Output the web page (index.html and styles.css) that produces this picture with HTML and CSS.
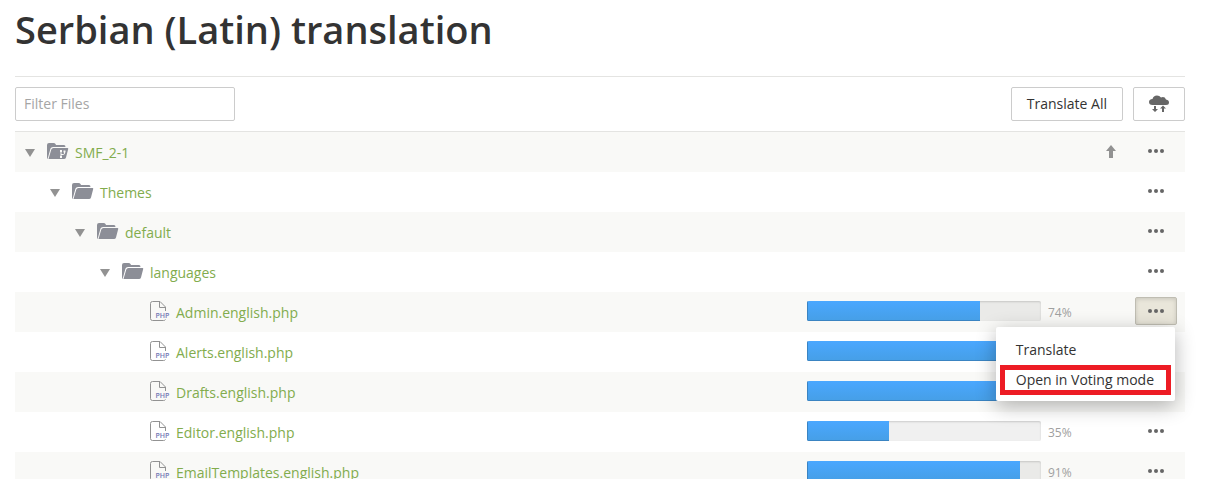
FILE: index.html
```html
<!DOCTYPE html>
<html lang="en">
<head>
<meta charset="utf-8">
<title>Serbian (Latin) translation</title>
<link rel="stylesheet" href="styles.css">
</head>
<body>
<svg class="sprite" aria-hidden="true">
  <symbol id="folder" viewBox="0 0 22 17">
    <path d="M0 14V2Q0 0 2 0H6.500Q8 0 8.500 1L9 2H17Q18.500 2 18.500 4H6Q4 4 3.500 5.500L1 14.500V16Q0 15.500 0 14Z"/>
    <path d="M6.500 5H20.500Q21.500 5 21.200 6L19 14.500Q18.500 16 17 16H1.500L4.300 6.500Q4.800 5 6.500 5Z"/>
  </symbol>
  <symbol id="file" viewBox="0 0 20 21">
    <path class="file-outline" d="M15.500 10V6L10 .5H2.500Q.5 .5 .5 2.500V17.500Q.5 19.500 2.500 19.500H13.500Q15 19.500 15.500 18.500M9.500 .5V6.500H15.500"/>
    <text class="file-type" x="5.500" y="17">PHP</text>
  </symbol>
  <symbol id="dots" viewBox="0 0 16 4">
    <circle cx="2" cy="2" r="2"/><circle cx="8" cy="2" r="2"/><circle cx="14" cy="2" r="2"/>
  </symbol>
</svg>
<main class="page">
  <h1 class="title">Serbian (Latin) translation</h1>
  <div class="toolbar">
    <input class="filter" type="text" placeholder="Filter Files" aria-label="Filter Files">
    <div class="toolbar-actions">
      <button class="button" type="button">Translate All</button>
      <button class="button button-icon" type="button" aria-label="Synchronize">
        <svg width="20" height="18" viewBox="0 0 20 18"><path d="M3.500 10Q0 10 0 7Q0 4.300 3.500 4Q4.300 .5 8 .5Q10.500 .5 12 2.500Q15.500 1 17 4.500Q20 5 20 7.500Q20 10 17 10ZM5 11H7V14H9L6 17L3 14H5ZM13 17V13.500H11L14 10.500L17 13.500H15V17Z"/></svg>
      </button>
    </div>
  </div>
  <table class="files">
    <colgroup><col><col class="col-progress"><col class="col-upload"><col class="col-actions"></colgroup>
    <tbody>
      <tr>
        <td><div class="entry level-0"><span class="caret"></span><svg class="folder" width="22" height="17"><use href="#folder"/><path class="branch" d="M14 14V7.500M14 11.500H16.500Q17.500 11.500 17.500 10V9"/><path class="branch-node" d="M13 7h2v2h-2zM13 13h2v2h-2zM16.500 7.500h2v2h-2z"/></svg><a href="#">SMF_2-1</a></div></td>
        <td></td>
        <td><svg class="upload" width="10" height="13" viewBox="0 0 10 13"><path d="M5 0L10 6H7V13H3V6H0Z"/></svg></td>
        <td><button class="more" type="button" aria-label="Actions"><svg width="16" height="4"><use href="#dots"/></svg></button></td>
      </tr>
      <tr>
        <td><div class="entry level-1"><span class="caret"></span><svg class="folder" width="22" height="17"><use href="#folder"/></svg><a href="#">Themes</a></div></td>
        <td></td><td></td>
        <td><button class="more" type="button" aria-label="Actions"><svg width="16" height="4"><use href="#dots"/></svg></button></td>
      </tr>
      <tr>
        <td><div class="entry level-2"><span class="caret"></span><svg class="folder" width="22" height="17"><use href="#folder"/></svg><a href="#">default</a></div></td>
        <td></td><td></td>
        <td><button class="more" type="button" aria-label="Actions"><svg width="16" height="4"><use href="#dots"/></svg></button></td>
      </tr>
      <tr>
        <td><div class="entry level-3"><span class="caret"></span><svg class="folder" width="22" height="17"><use href="#folder"/></svg><a href="#">languages</a></div></td>
        <td></td><td></td>
        <td><button class="more" type="button" aria-label="Actions"><svg width="16" height="4"><use href="#dots"/></svg></button></td>
      </tr>
      <tr>
        <td><div class="entry level-4"><svg class="file" width="20" height="21"><use href="#file"/></svg><a href="#">Admin.english.php</a></div></td>
        <td><div class="progress"><div class="bar"><div class="fill" style="width:74%"></div></div><span class="percent">74%</span></div></td>
        <td></td>
        <td class="has-menu"><button class="more more-open" type="button" aria-label="Actions" aria-expanded="true"><svg width="16" height="4"><use href="#dots"/></svg></button>
          <div class="menu"><a class="menu-item" href="#">Translate</a><a class="menu-item menu-marked" href="#">Open in Voting mode</a></div></td>
      </tr>
      <tr>
        <td><div class="entry level-4"><svg class="file" width="20" height="21"><use href="#file"/></svg><a href="#">Alerts.english.php</a></div></td>
        <td><div class="progress"><div class="bar"><div class="fill" style="width:100%"></div></div></div></td>
        <td></td><td></td>
      </tr>
      <tr>
        <td><div class="entry level-4"><svg class="file" width="20" height="21"><use href="#file"/></svg><a href="#">Drafts.english.php</a></div></td>
        <td><div class="progress"><div class="bar"><div class="fill" style="width:100%"></div></div></div></td>
        <td></td><td></td>
      </tr>
      <tr>
        <td><div class="entry level-4"><svg class="file" width="20" height="21"><use href="#file"/></svg><a href="#">Editor.english.php</a></div></td>
        <td><div class="progress"><div class="bar"><div class="fill" style="width:35%"></div></div><span class="percent">35%</span></div></td>
        <td></td>
        <td><button class="more" type="button" aria-label="Actions"><svg width="16" height="4"><use href="#dots"/></svg></button></td>
      </tr>
      <tr>
        <td><div class="entry level-4"><svg class="file" width="20" height="21"><use href="#file"/></svg><a href="#">EmailTemplates.english.php</a></div></td>
        <td><div class="progress"><div class="bar"><div class="fill" style="width:91%"></div></div><span class="percent">91%</span></div></td>
        <td></td>
        <td><button class="more" type="button" aria-label="Actions"><svg width="16" height="4"><use href="#dots"/></svg></button></td>
      </tr>
    </tbody>
  </table>
</main>
</body>
</html>
```
FILE: styles.css
```css
* { box-sizing: border-box; }

body {
  margin: 0;
  overflow: hidden;
  background: #fff;
  color: #333;
  font: 14px/20px "Open Sans", "Noto Sans", sans-serif;
}

.sprite { position: absolute; width: 0; height: 0; }

.page { padding: 0 24px 0 15px; }

.title {
  margin: 0;
  padding-bottom: 18px;
  border-bottom: 1px solid #e4e4e2;
  font-size: 38px;
  font-weight: 600;
  line-height: 58px;
}

.toolbar {
  display: flex;
  justify-content: space-between;
  padding: 10px 0;
}

.filter {
  width: 220px;
  height: 34px;
  padding: 0 8px 2px;
  border: 1px solid #ccc;
  border-radius: 2px;
  color: #333;
  font: inherit;
}
.filter::placeholder { color: #a5a5a5; }

.toolbar-actions { display: flex; gap: 10px; }

.button {
  height: 34px;
  padding: 0 15px;
  border: 1px solid #ccc;
  border-radius: 2px;
  background: #fff;
  color: #333;
  font: inherit;
}
.button-icon {
  display: flex;
  align-items: center;
  fill: #666;
}

.files {
  width: 100%;
  border-top: 1px solid #e4e4e2;
  border-spacing: 0;
  table-layout: fixed;
}
.files tr:nth-child(odd) { background: #f9f9f7; }
.files td { height: 40px; padding: 0 0 2px; }
.col-progress { width: 288px; }
.col-upload { width: 32px; }
.col-actions { width: 58px; }

.entry { display: flex; align-items: center; }
.entry a { padding-top: 3px; color: #82ac4d; text-decoration: none; }
.level-0 { padding-left: 10px; }
.level-1 { padding-left: 35px; }
.level-2 { padding-left: 60px; }
.level-3 { padding-left: 85px; }
.level-4 { padding-left: 135px; }

.caret {
  margin: 3px 12px 0 0;
  border: 5px solid transparent;
  border-top: 8px solid #929292;
  border-bottom: 0;
}
.folder { margin-right: 6px; fill: #8c8e97; }
.branch { fill: none; stroke: #f9f9f7; }
.branch-node { fill: #f9f9f7; }
.file { margin-right: 6px; overflow: visible; }
.file-outline { fill: none; stroke: #929292; }
.file-type { fill: #7478b5; font: 600 7px "Open Sans", sans-serif; }

.upload { display: block; margin: 0 auto; fill: #929292; }

.progress { display: flex; align-items: center; gap: 7px; }
.bar {
  width: 234px;
  height: 20px;
  overflow: hidden;
  border-radius: 2px;
  background: rgba(0, 0, 0, .06);
  box-shadow: inset 0 1px 2px rgba(0, 0, 0, .15);
}
.fill {
  height: 100%;
  background: linear-gradient(#4aa7ff, #469fe6);
  box-shadow: inset 1px -1px 0 #3a84c2;
}
.percent { padding-top: 3px; color: #a0a0a0; font-size: 12px; }

.more {
  display: flex;
  align-items: center;
  justify-content: center;
  width: 42px;
  height: 28px;
  margin: 0 auto;
  padding: 0;
  border: 1px solid transparent;
  border-radius: 2px;
  background: none;
  fill: #666;
}
.more-open {
  border-color: #bfbdb2;
  background: #e9e6da;
  box-shadow: inset 0 1px 4px rgba(0, 0, 0, .15);
}

.has-menu { position: relative; }
.menu {
  position: absolute;
  top: 35px;
  right: 10px;
  z-index: 1;
  padding: 8px 4px 6px;
  border-radius: 2px;
  background: #fff;
  box-shadow: 0 5px 20px rgba(0, 0, 0, .3);
}
.menu-item {
  display: block;
  padding: 0 12px 0 11px;
  border: 5px solid transparent;
  color: #333;
  text-decoration: none;
  white-space: nowrap;
}
.menu-marked { border-color: #ed1c24; }
```
